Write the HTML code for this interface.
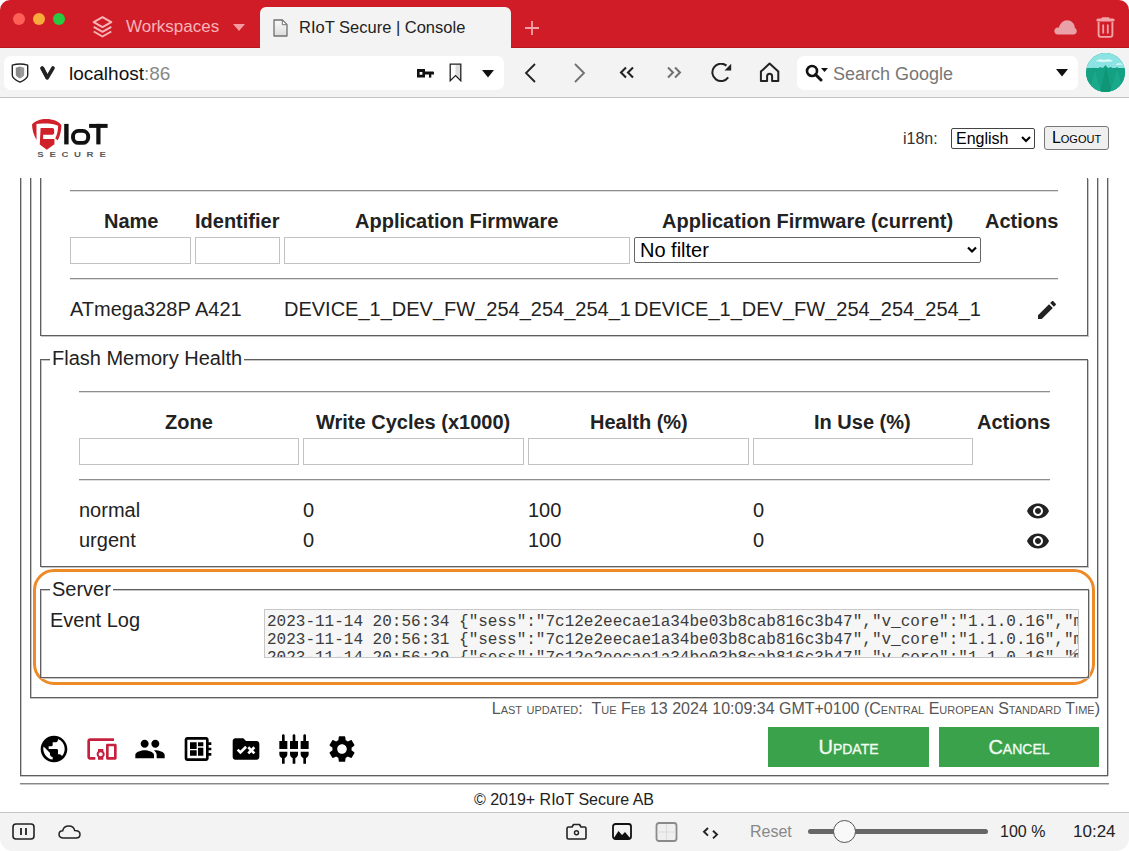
<!DOCTYPE html>
<html><head><meta charset="utf-8">
<style>
*{box-sizing:border-box}
html,body{margin:0;padding:0}
body{width:1129px;height:851px;overflow:hidden;position:relative;background:#fff;font-family:"Liberation Sans",sans-serif;color:#222}
.a{position:absolute}
.tabbar{left:0;top:0;width:1129px;height:48px;background:#d01c27;border-radius:10px 10px 0 0;box-shadow:inset 0 -1px 0 #b8161f}
.tab{left:260px;top:7px;width:251px;height:41px;background:#f3f3f3;border-radius:6px 6px 0 0}
.addr{left:0;top:48px;width:1129px;height:50px;background:#f3f3f3;border-bottom:1px solid #c4c4c4}
.field{background:#fff;border-radius:7px}
.status{left:0;top:812px;width:1129px;height:39px;background:#f3f3f3;border-top:1px solid #c4c4c4;border-radius:0 0 13px 13px}
.vl{width:1px;background:#5f5f5f;box-shadow:1px 0 0 #c6c6c6}
.hl{height:1px;background:#5f5f5f;box-shadow:0 1px 0 #c6c6c6}
.hr{background:#8e8e8e!important;box-shadow:0 1px 0 #dedede}
.fs{border:1px solid #5f5f5f;box-shadow:inset 1px 1px 0 #c6c6c6,1px 1px 0 #c6c6c6}
.th{font-weight:bold;font-size:20px;white-space:nowrap}
.t20{font-size:20px;white-space:nowrap}
.inp{border:1px solid #c2c2c2;background:#fff}
.leg{font-size:20px;background:#fff;padding:0 2px;white-space:nowrap}
.sc{font-variant:small-caps}
.btn{background:#3aa24a;color:#f2fbf2;font-size:20px;font-variant:small-caps;text-align:center;line-height:38px;padding-top:1px;-webkit-text-stroke:0.35px #f2fbf2}
svg{display:block}
</style></head><body>

<!-- TAB BAR -->
<div class="a tabbar"></div>
<div class="a" style="left:13px;top:13px;width:12px;height:12px;border-radius:50%;background:#fe5f57"></div>
<div class="a" style="left:33px;top:13px;width:12px;height:12px;border-radius:50%;background:#f8ab3a"></div>
<div class="a" style="left:53px;top:13px;width:12px;height:12px;border-radius:50%;background:#28c840"></div>
<svg class="a" style="left:92px;top:16px" width="21" height="22" viewBox="0 0 21 22"><g fill="none" stroke="#f6b5b9" stroke-width="2" stroke-linejoin="round"><path d="M10.5 1.2 L19.3 6.2 L10.5 11.2 L1.7 6.2 Z"/><path d="M1.7 10.8 L10.5 15.8 L19.3 10.8"/><path d="M1.7 15.5 L10.5 20.5 L19.3 15.5"/></g></svg>
<div class="a" style="left:126px;top:17px;font-size:17px;color:#f6b5b9;white-space:nowrap">Workspaces</div>
<svg class="a" style="left:233px;top:24px" width="12" height="7" viewBox="0 0 12 7"><path d="M0 0H12L6 7Z" fill="#f29aa0"/></svg>
<div class="a tab"></div>
<svg class="a" style="left:273px;top:19px" width="15" height="18" viewBox="0 0 15 18"><defs><linearGradient id="dg" x1="0" y1="0" x2="0" y2="1"><stop offset="0" stop-color="#fafafa"/><stop offset="1" stop-color="#dcdcdc"/></linearGradient></defs><path d="M1 1H9.3L14 5.7V17H1Z" fill="url(#dg)" stroke="#707070" stroke-width="1.3" stroke-linejoin="round"/><path d="M9.3 1V5.7H14Z" fill="#fff" stroke="#707070" stroke-width="1" stroke-linejoin="round"/></svg>
<div class="a" style="left:299px;top:18px;font-size:16.5px;color:#222;white-space:nowrap">RIoT Secure | Console</div>
<svg class="a" style="left:524px;top:20px" width="16" height="16" viewBox="0 0 16 16"><path d="M8 1V15M1 8H15" stroke="#f3a3a8" stroke-width="1.8"/></svg>
<svg class="a" style="left:1054px;top:20px" width="23" height="15" viewBox="0 0 23 15"><path d="M4 14.6C1.6 14.6 0.3 12.9 0.3 11C0.3 9 1.8 7.4 3.9 7.4C4.3 7.4 4.6 7.5 4.9 7.6C6 3.4 9.2 0.3 13.1 0.3C17.4 0.3 20.6 3.6 20.9 7.9C22.1 8.5 22.8 9.8 22.8 11.3C22.8 13.2 21.4 14.6 19.3 14.6Z" fill="#e9a0a6"/></svg>
<svg class="a" style="left:1096px;top:17px" width="19" height="21" viewBox="0 0 19 21"><rect x="0.4" y="1.6" width="18.2" height="3" rx="1.5" fill="#f3a3a8"/><rect x="5.5" y="0.3" width="8" height="2.4" rx="1.2" fill="#f3a3a8"/><path d="M2.6 5V17.8Q2.6 19.9 4.7 19.9H14.3Q16.4 19.9 16.4 17.8V5" fill="none" stroke="#f3a3a8" stroke-width="1.9"/><path d="M7.2 7.5V16.5M11.8 7.5V16.5" stroke="#f3a3a8" stroke-width="1.8"/></svg>

<!-- ADDRESS BAR -->
<div class="a addr"></div>
<div class="a field" style="left:4px;top:56px;width:500px;height:34px"></div>
<svg class="a" style="left:11px;top:63px" width="18" height="20" viewBox="0 0 18 20"><path d="M1.3 2.2Q9 -0.2 16.7 2.2V12.2Q16.7 15.6 9 19.2Q1.3 15.6 1.3 12.2Z" fill="#fff" stroke="#222" stroke-width="1.4" stroke-linejoin="round"/><path d="M9 3.6L13.2 4.8V11.6Q13.2 13.8 9 15.6Z" fill="#9a9a9a"/><path d="M9 3.6L4.8 4.8V11.6Q4.8 13.8 9 15.6Z" fill="#8a8a8a"/></svg>
<svg class="a" style="left:39px;top:65px" width="17" height="16" viewBox="0 0 17 16"><path d="M3 3L8.2 12.8L14 3" fill="none" stroke="#222" stroke-width="3.6" stroke-linecap="round" stroke-linejoin="round"/><path d="M1.2 3.5L4.8 1.8L9.5 11L7 13.8Z" fill="#222"/></svg>
<div class="a" style="left:69px;top:63px;font-size:19px;color:#111;white-space:nowrap">localhost<span style="color:#888">:86</span></div>
<svg class="a" style="left:417px;top:69px" width="17" height="9" viewBox="0 0 17 9"><path d="M0 0H8V8.5H0Z M2.6 2.9V5.7H5.4V2.9Z" fill="#111" fill-rule="evenodd"/><path d="M8 2.4H16Q17 2.4 17 3.4V5.6H8Z" fill="#111"/><rect x="12" y="5" width="2.3" height="3.6" fill="#111"/></svg>
<svg class="a" style="left:449px;top:63px" width="13" height="19" viewBox="0 0 13 19"><path d="M6.5 1.5H11.8V17.6L6.5 12.6Z" fill="#ddd"/><path d="M1.2 1.2H11.8V17.8L6.5 12.6L1.2 17.8Z" fill="none" stroke="#222" stroke-width="1.3" stroke-linejoin="miter"/></svg>
<svg class="a" style="left:482px;top:70px" width="12" height="8" viewBox="0 0 12 8"><path d="M0 0H12L6 7.5Z" fill="#111"/></svg>
<svg class="a" style="left:524px;top:63px" width="12" height="20" viewBox="0 0 12 20"><path d="M11 1L2 10L11 19" fill="none" stroke="#222" stroke-width="1.8"/></svg>
<svg class="a" style="left:574px;top:63px" width="12" height="20" viewBox="0 0 12 20"><path d="M1 1L10 10L1 19" fill="none" stroke="#707070" stroke-width="1.8"/></svg>
<svg class="a" style="left:619px;top:66px" width="16" height="13" viewBox="0 0 16 13"><path d="M7 1.5L2 6.5L7 11.5M14 1.5L9 6.5L14 11.5" fill="none" stroke="#222" stroke-width="2.1"/></svg>
<svg class="a" style="left:666px;top:66px" width="16" height="13" viewBox="0 0 16 13"><path d="M2 1.5L7 6.5L2 11.5M9 1.5L14 6.5L9 11.5" fill="none" stroke="#707070" stroke-width="2"/></svg>
<svg class="a" style="left:710px;top:63px" width="23" height="20" viewBox="0 0 23 20"><path d="M18.2 14.4A8.7 8.7 0 1 1 16.5 2.6" fill="none" stroke="#222" stroke-width="2"/><path d="M14.5 7.5H21.2V0.8Z" fill="#222"/></svg>
<svg class="a" style="left:759px;top:62px" width="22" height="21" viewBox="0 0 22 21"><path d="M1.9 19V9.6L10.6 1.6L19.3 9.6V19H13.1V14.2A2.5 2.5 0 0 0 8.1 14.2V19Z" fill="none" stroke="#222" stroke-width="2" stroke-linejoin="round"/></svg>
<div class="a field" style="left:797px;top:56px;width:281px;height:34px"></div>
<svg class="a" style="left:805px;top:64px" width="24" height="18" viewBox="0 0 24 18"><circle cx="7" cy="7" r="5" fill="none" stroke="#111" stroke-width="2.6"/><path d="M10.5 10.5L16 16" stroke="#111" stroke-width="3" stroke-linecap="round"/><path d="M16 4H23L19.5 8Z" fill="#111"/></svg>
<div class="a" style="left:833px;top:64px;font-size:18px;color:#777;white-space:nowrap">Search Google</div>
<svg class="a" style="left:1056px;top:69px" width="12" height="8" viewBox="0 0 12 8"><path d="M0 0H12L6 7.5Z" fill="#111"/></svg>
<div class="a" style="left:1086px;top:53px;width:39px;height:39px;border-radius:50%;overflow:hidden;background:#14a083">
 <svg class="a" style="left:0;top:0" width="39" height="39" viewBox="0 0 39 39"><rect x="0" y="0" width="39" height="15" fill="#8be3e3"/><path d="M10 8C12 6 16 6 18 7C21 5.5 25 6 27 8C24 9 14 9.5 10 8Z" fill="#d9f8f6"/><path d="M30 11C32 10 35 10 37 11.5L30 12Z" fill="#d9f8f6"/><path d="M0 18L3 16L5 17L8 14.5L11 16.5L14 14L17 15L19.5 12L22 15L25 14L28 16L31 14L34 16.5L39 15V39H0Z" fill="#14a083"/><path d="M14 39L20 14L26 39Z" fill="#0e9677"/><path d="M3 39L9 18L15 39Z" fill="#1aa98b"/><path d="M24 39L31 17L38 39Z" fill="#1aa98b"/></svg>
</div>

<!-- PAGE HEADER -->
<svg class="a" style="left:28px;top:114px" width="40" height="40" viewBox="0 0 851 851">
 <path fill="#d0212b" d="M85 225C200 62 600 62 712 238C705 380 680 470 632 560L580 520C625 430 642 330 640 250C540 195 300 195 180 212L182 552C120 450 90 340 85 225Z"/>
 <path fill="#d0212b" d="M268 300H515C545 300 557 318 557 350V395C557 425 545 440 515 440H322V530H562V645L400 760L250 650Z"/>
</svg>
<svg class="a" style="left:60px;top:118px" width="52" height="42" viewBox="0 0 52 42">
 <rect x="4.2" y="5.9" width="4.4" height="20.5" fill="#111"/>
 <rect x="13" y="12.9" width="15.2" height="12" rx="5.5" fill="none" stroke="#111" stroke-width="3.9"/>
 <rect x="29.1" y="5.9" width="18.5" height="4" fill="#111"/>
 <rect x="36.3" y="5.9" width="4.2" height="20.5" fill="#111"/>
</svg>
<svg class="a" style="left:0px;top:148px" width="112" height="12" viewBox="0 0 112 12"><text transform="translate(37.3 9) scale(1.3 1)" font-family="Liberation Sans" font-weight="bold" font-size="7.4" fill="#5a5a5a">S</text><text transform="translate(49.6 9) scale(1.3 1)" font-family="Liberation Sans" font-weight="bold" font-size="7.4" fill="#5a5a5a">E</text><text transform="translate(61.5 9) scale(1.3 1)" font-family="Liberation Sans" font-weight="bold" font-size="7.4" fill="#5a5a5a">C</text><text transform="translate(74 9) scale(1.3 1)" font-family="Liberation Sans" font-weight="bold" font-size="7.4" fill="#5a5a5a">U</text><text transform="translate(86.6 9) scale(1.3 1)" font-family="Liberation Sans" font-weight="bold" font-size="7.4" fill="#5a5a5a">R</text><text transform="translate(99.5 9) scale(1.3 1)" font-family="Liberation Sans" font-weight="bold" font-size="7.4" fill="#5a5a5a">E</text></svg>
<div class="a" style="left:903px;top:130px;font-size:16px;color:#333">i18n:</div>
<div class="a" style="left:951px;top:128px;width:84px;height:21px;border:1px solid #444;border-radius:2px;background:#fff;font-size:16px;color:#000;padding-left:4px;line-height:19px">English<svg class="a" style="left:69px;top:7px" width="10" height="7" viewBox="0 0 10 7"><path d="M1 1L5 5L9 1" fill="none" stroke="#000" stroke-width="2"/></svg></div>
<div class="a" style="left:1044px;top:126px;width:65px;height:24px;border:1px solid #777;border-radius:3px;background:#efefef;font-size:16px;color:#000;text-align:center;line-height:21px;font-variant:small-caps">Logout</div>

<!-- CONTAINER LINES -->
<div class="a vl" style="left:20px;top:178px;height:598px"></div>
<div class="a vl" style="left:1107px;top:178px;height:598px"></div>
<div class="a hl" style="left:20px;top:775px;width:1088px"></div>
<div class="a vl" style="left:30px;top:178px;height:520px"></div>
<div class="a vl" style="left:1097px;top:178px;height:520px"></div>
<div class="a hl" style="left:30px;top:697px;width:1068px"></div>

<!-- DEVICE FIELDSET (clipped at top) -->
<div class="a fs" style="left:40px;top:178px;width:1048px;height:158px;border-top:none;box-shadow:inset 1px 0 0 #c6c6c6,1px 1px 0 #c6c6c6"></div>
<div class="a hl hr" style="left:70px;top:190px;width:988px"></div>
<div class="a th" style="left:104px;top:210px">Name</div>
<div class="a th" style="left:195px;top:210px">Identifier</div>
<div class="a th" style="left:355px;top:210px">Application Firmware</div>
<div class="a th" style="left:662px;top:210px">Application Firmware (current)</div>
<div class="a th" style="left:985px;top:210px">Actions</div>
<div class="a inp" style="left:70px;top:237px;width:121px;height:27px"></div>
<div class="a inp" style="left:195px;top:237px;width:85px;height:27px"></div>
<div class="a inp" style="left:284px;top:237px;width:346px;height:27px"></div>
<div class="a" style="left:634px;top:237px;width:347px;height:26px;border:1px solid #666;border-radius:2px;background:#fff"></div>
<div class="a t20" style="left:640px;top:239px;color:#000">No filter</div>
<svg class="a" style="left:967px;top:246px" width="10" height="8" viewBox="0 0 10 8"><path d="M1 1.5L5 5.5L9 1.5" fill="none" stroke="#000" stroke-width="2.2"/></svg>
<div class="a hl hr" style="left:70px;top:278px;width:988px"></div>
<div class="a t20" style="left:70px;top:298px">ATmega328P</div>
<div class="a t20" style="left:195px;top:298px">A421</div>
<div class="a t20" style="left:284px;top:298px">DEVICE_1_DEV_FW_254_254_254_1</div>
<div class="a t20" style="left:634px;top:298px">DEVICE_1_DEV_FW_254_254_254_1</div>
<svg class="a" style="left:1035px;top:298px" width="24" height="24" viewBox="0 0 24 24"><path fill="#222" d="M3 17.25V21h3.75L17.81 9.94l-3.75-3.75L3 17.25zM20.71 7.04c.39-.39.39-1.02 0-1.41l-2.34-2.34c-.39-.39-1.02-.39-1.41 0l-1.83 1.83 3.75 3.75 1.83-1.83z"/></svg>

<!-- FLASH FIELDSET -->
<div class="a fs" style="left:40px;top:359px;width:1048px;height:208px"></div>
<div class="a leg" style="left:50px;top:347px">Flash Memory Health</div>
<div class="a hl hr" style="left:79px;top:391px;width:971px"></div>
<div class="a th" style="left:165px;top:411px">Zone</div>
<div class="a th" style="left:316px;top:411px">Write Cycles (x1000)</div>
<div class="a th" style="left:590px;top:411px">Health (%)</div>
<div class="a th" style="left:814px;top:411px">In Use (%)</div>
<div class="a th" style="left:977px;top:411px">Actions</div>
<div class="a inp" style="left:79px;top:438px;width:220px;height:27px"></div>
<div class="a inp" style="left:303px;top:438px;width:221px;height:27px"></div>
<div class="a inp" style="left:528px;top:438px;width:221px;height:27px"></div>
<div class="a inp" style="left:753px;top:438px;width:220px;height:27px"></div>
<div class="a hl hr" style="left:79px;top:479px;width:971px"></div>
<div class="a t20" style="left:79px;top:499px">normal</div>
<div class="a t20" style="left:303px;top:499px">0</div>
<div class="a t20" style="left:528px;top:499px">100</div>
<div class="a t20" style="left:753px;top:499px">0</div>
<div class="a t20" style="left:79px;top:529px">urgent</div>
<div class="a t20" style="left:303px;top:529px">0</div>
<div class="a t20" style="left:528px;top:529px">100</div>
<div class="a t20" style="left:753px;top:529px">0</div>
<svg class="a" style="left:1026px;top:499px" width="24" height="24" viewBox="0 0 24 24"><path fill="#222" d="M12 4.5C7 4.5 2.73 7.61 1 12c1.73 4.39 6 7.5 11 7.5s9.27-3.11 11-7.5c-1.73-4.39-6-7.5-11-7.5zM12 17c-2.76 0-5-2.24-5-5s2.24-5 5-5 5 2.24 5 5-2.24 5-5 5zm0-8c-1.66 0-3 1.34-3 3s1.34 3 3 3 3-1.34 3-3-1.34-3-3-3z"/></svg>
<svg class="a" style="left:1026px;top:529px" width="24" height="24" viewBox="0 0 24 24"><path fill="#222" d="M12 4.5C7 4.5 2.73 7.61 1 12c1.73 4.39 6 7.5 11 7.5s9.27-3.11 11-7.5c-1.73-4.39-6-7.5-11-7.5zM12 17c-2.76 0-5-2.24-5-5s2.24-5 5-5 5 2.24 5 5-2.24 5-5 5zm0-8c-1.66 0-3 1.34-3 3s1.34 3 3 3 3-1.34 3-3-1.34-3-3-3z"/></svg>

<!-- SERVER FIELDSET -->
<div class="a" style="left:33px;top:569px;width:1062px;height:116px;border:3.3px solid #ef8b27;border-radius:21px"></div>
<div class="a fs" style="left:40px;top:589px;width:1049px;height:89px"></div>
<div class="a leg" style="left:50px;top:578px">Server</div>
<div class="a t20" style="left:50px;top:609px">Event Log</div>
<div class="a" style="left:264px;top:609px;width:815px;height:49px;border:1px solid #c8c8c8;background:#f6f6f6;overflow:hidden;font-family:'Liberation Mono',monospace;font-size:16px;line-height:18px;color:#3c3c3c;padding:3px 0 0 2px;white-space:pre">2023-11-14 20:56:34 {"sess":"7c12e2eecae1a34be03b8cab816c3b47","v_core":"1.1.0.16","m
2023-11-14 20:56:31 {"sess":"7c12e2eecae1a34be03b8cab816c3b47","v_core":"1.1.0.16","m
2023-11-14 20:56:29 {"sess":"7c12e2eecae1a34be03b8cab816c3b47","v_core":"1.1.0.16","m</div>

<svg class="a" style="left:1069px;top:648px" width="9" height="9" viewBox="0 0 9 9"><path d="M8.5 1L1 8.5M8.5 5L5 8.5" stroke="#666" stroke-width="1"/></svg>
<!-- LAST UPDATED / ICONS / BUTTONS -->
<div class="a sc" style="right:29px;top:700px;font-size:16px;color:#555;white-space:nowrap">Last updated: &nbsp;Tue Feb 13 2024 10:09:34 GMT+0100 (Central European Standard Time)</div>

<svg class="a" style="left:38px;top:733px" width="32" height="32" viewBox="0 0 24 24"><path fill="#000" d="M12 2C6.48 2 2 6.48 2 12s4.48 10 10 10 10-4.48 10-10S17.52 2 12 2zm-1 17.93c-3.95-.49-7-3.85-7-7.93 0-.62.08-1.21.21-1.79L9 15v1c0 1.1.9 2 2 2v1.93zm6.9-2.54c-.26-.81-1-1.390-1.9-1.39h-1v-3c0-.55-.45-1-1-1H8v-2h2c.55 0 1-.45 1-1V7h2c1.1 0 2-.9 2-2v-.41c2.93 1.19 5 4.06 5 7.41 0 2.08-.8 3.970-2.1 5.39z"/></svg>
<svg class="a" style="left:86px;top:733px" width="32" height="32" viewBox="0 0 24 24"><path fill="#c5203e" d="M3 6h18V4H3c-1.1 0-2 .9-2 2v12c0 1.1.9 2 2 2h4v-2H3V6zm10 6H9v1.78c-.61.55-1 1.33-1 2.22s.39 1.67 1 2.22V20h4v-1.78c.61-.55 1-1.34 1-2.22s-.39-1.67-1-2.22V12zm-2 5.5c-.83 0-1.5-.67-1.5-1.5s.67-1.5 1.5-1.5 1.5.67 1.5 1.5-.67 1.5-1.5 1.5zM22 8h-6c-.5 0-1 .5-1 1v10c0 .5.5 1 1 1h6c.5 0 1-.5 1-1V9c0-.5-.5-1-1-1zm-1 10h-4v-8h4v8z"/></svg>
<svg class="a" style="left:134px;top:733px" width="32" height="32" viewBox="0 0 24 24"><path fill="#000" d="M16 11c1.66 0 2.99-1.34 2.99-3S17.66 5 16 5c-1.66 0-3 1.34-3 3s1.34 3 3 3zm-8 0c1.66 0 2.99-1.34 2.99-3S9.66 5 8 5C6.34 5 5 6.34 5 8s1.34 3 3 3zm0 2c-2.33 0-7 1.17-7 3.5V19h14v-2.5c0-2.330-4.67-3.5-7-3.5zm8 0c-.29 0-.62.02-.97.05 1.16.84 1.97 1.97 1.97 3.45V19h6v-2.5c0-2.33-4.67-3.5-7-3.5z"/></svg>
<svg class="a" style="left:182px;top:733px" width="32" height="32" viewBox="0 0 24 24"><path fill="#000" d="M22 9V7h-2V5c0-1.1-.9-2-2-2H4c-1.1 0-2 .9-2 2v14c0 1.1.9 2 2 2h14c1.1 0 2-.9 2-2v-2h2v-2h-2v-2h2v-2h-2V9h2zm-4 10H4V5h14v14zM6 13h5v4H6zm6-6h4v3h-4zM6 7h5v5H6zm6 4h4v6h-4z"/></svg>
<svg class="a" style="left:230px;top:733px" width="32" height="32" viewBox="0 0 24 24"><path fill="#000" d="M20 6h-8l-2-2H4C2.9 4 2.01 4.9 2.01 6L2 18c0 1.1.9 2 2 2h16c1.1 0 2-.9 2-2V8c0-1.1-.9-2-2-2z"/><path fill="#fff" d="M7.83 16L5 13.17l1.41-1.41 1.41 1.41 3.54-3.54 1.41 1.41L7.83 16zM17.41 13L19 14.59 17.59 16 16 14.41 14.41 16 13 14.59 14.59 13 13 11.41 14.41 10 16 11.59 17.59 10 19 11.41 17.41 13z"/></svg>
<svg class="a" style="left:278px;top:733px" width="32" height="32" viewBox="0 0 24 24"><path fill="#000" d="M5 2c0-.55-.45-1-1-1s-1 .45-1 1v4H1v6h6V6H5V2zm4 14c0 1.3.84 2.4 2 2.82V23h2v-4.18c1.16-.41 2-1.51 2-2.82v-2H9v2zm-8 0c0 1.3.84 2.4 2 2.82V23h2v-4.18C6.16 18.4 7 17.3 7 16v-2H1v2zM21 6V2c0-.55-.45-1-1-1s-1 .45-1 1v4h-2v6h6V6h-2zm-8-4c0-.55-.45-1-1-1s-1 .45-1 1v4H9v6h6V6h-2V2zm4 14c0 1.3.84 2.4 2 2.82V23h2v-4.18c1.160-.41 2-1.51 2-2.82v-2h-6v2z"/></svg>
<svg class="a" style="left:326px;top:733px" width="32" height="32" viewBox="0 0 24 24"><path fill="#000" d="M19.14 12.94c.04-.3.06-.61.06-.94 0-.32-.02-.64-.07-.94l2.03-1.58c.18-.14.23-.41.12-.61l-1.92-3.32c-.12-.22-.37-.29-.59-.22l-2.39.96c-.5-.38-1.03-.7-1.62-.94l-.36-2.54c-.04-.24-.24-.41-.48-.41h-3.84c-.24 0-.43.17-.47.41l-.36 2.54c-.59.24-1.13.57-1.62.94l-2.39-.96c-.22-.08-.47 0-.59.22L2.74 8.87c-.12.21-.08.47.12.61l2.03 1.58c-.05.3-.09.63-.09.94s.02.64.07.94l-2.03 1.58c-.18.14-.23.41-.12.61l1.92 3.32c.12.22.37.29.59.22l2.39-.96c.5.38 1.03.7 1.62.94l.36 2.54c.05.24.24.41.48.41h3.84c.24 0 .44-.17.47-.41l.36-2.54c.59-.24 1.13-.56 1.62-.94l2.39.96c.22.08.47 0 .59-.22l1.92-3.32c.12-.22.07-.47-.12-.61l-2.01-1.58zM12 15.6c-1.98 0-3.6-1.62-3.6-3.6s1.62-3.6 3.6-3.6 3.6 1.62 3.6 3.6-1.62 3.6-3.6 3.6z"/></svg>

<div class="a btn" style="left:768px;top:727px;width:161px;height:40px">Update</div>
<div class="a btn" style="left:939px;top:727px;width:160px;height:40px">Cancel</div>

<!-- FOOTER -->
<div class="a hl" style="left:20px;top:783px;width:1089px;background:#888"></div>
<div class="a" style="left:20px;top:791px;width:1088px;text-align:center;font-size:16px;color:#222">© 2019+ RIoT Secure AB</div>

<!-- STATUS BAR -->
<div class="a status"></div>
<svg class="a" style="left:12px;top:823px" width="23" height="17" viewBox="0 0 23 17"><rect x="1" y="1" width="21" height="15" rx="3" fill="none" stroke="#222" stroke-width="1.6"/><path d="M9 5V12M14 5V12" stroke="#222" stroke-width="1.8"/></svg>
<svg class="a" style="left:58px;top:825px" width="23" height="14" viewBox="0 0 23 14"><path d="M5.5 13C3 13 1 11.5 1 9.3C1 7.3 2.6 5.8 4.7 5.7C5.3 2.9 7.7 1 10.8 1C13.8 1 16.2 3 16.7 5.6C19.5 5.6 22 7 22 9.5C22 11.5 20.3 13 18 13Z" fill="none" stroke="#222" stroke-width="1.5"/></svg>
<svg class="a" style="left:566px;top:823px" width="21" height="17" viewBox="0 0 21 17"><path d="M2.5 4H6L7.5 1.5H13.5L15 4H18.5C19.5 4 20 4.5 20 5.5V14.5C20 15.5 19.5 16 18.5 16H2.5C1.5 16 1 15.5 1 14.5V5.5C1 4.5 1.5 4 2.5 4Z" fill="none" stroke="#222" stroke-width="1.6" stroke-linejoin="round"/><circle cx="10.5" cy="9.8" r="2" fill="none" stroke="#222" stroke-width="1.4"/></svg>
<svg class="a" style="left:612px;top:823px" width="20" height="17" viewBox="0 0 20 17"><rect x="1" y="1" width="18" height="15" rx="2.5" fill="none" stroke="#111" stroke-width="1.8"/><path d="M1.5 15.5L6.5 8L10 12L13 9L18.5 15.5Z" fill="#111"/></svg>
<svg class="a" style="left:655px;top:822px" width="23" height="20" viewBox="0 0 23 20"><rect x="1.5" y="1" width="20" height="18" rx="2.5" fill="#efefef" stroke="#8a8a8a" stroke-width="1.8"/><path d="M11.5 2V18M2 10H21" stroke="#dcdcdc" stroke-width="1.2"/></svg>
<svg class="a" style="left:702px;top:827px" width="17" height="13" viewBox="0 0 17 13"><path d="M6 1L2 4.8L6 8.6M11 3.8L15 7.6L11 11.4" fill="none" stroke="#222" stroke-width="1.9"/></svg>
<div class="a" style="left:750px;top:823px;font-size:16px;color:#888">Reset</div>
<div class="a" style="left:808px;top:829px;width:180px;height:5px;border-radius:3px;background:#666"></div>
<div class="a" style="left:833px;top:820px;width:23px;height:23px;border-radius:50%;background:#f9f9f9;border:1px solid #555"></div>
<div class="a" style="left:1000px;top:823px;font-size:16px;color:#222;white-space:nowrap">100 %</div>
<div class="a" style="left:1073px;top:822px;font-size:17px;color:#222">10:24</div>

</body></html>
